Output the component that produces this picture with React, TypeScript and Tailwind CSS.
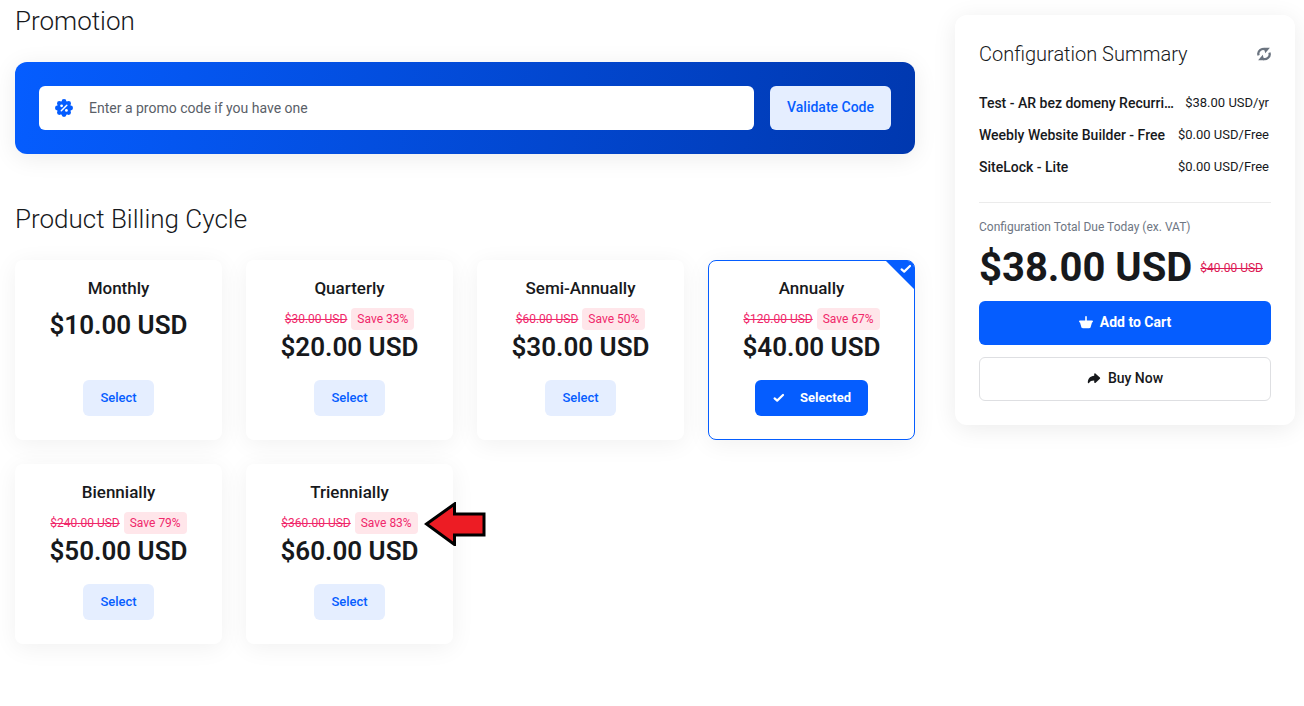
import { useState } from "react";

type Cycle = { name: string; price: string; old?: string; save?: string; note?: boolean };

const cycles: Cycle[] = [
  { name: "Monthly", price: "$10.00 USD" },
  { name: "Quarterly", price: "$20.00 USD", old: "$30.00 USD", save: "Save 33%" },
  { name: "Semi-Annually", price: "$30.00 USD", old: "$60.00 USD", save: "Save 50%" },
  { name: "Annually", price: "$40.00 USD", old: "$120.00 USD", save: "Save 67%" },
  { name: "Biennially", price: "$50.00 USD", old: "$240.00 USD", save: "Save 79%" },
  { name: "Triennially", price: "$60.00 USD", old: "$360.00 USD", save: "Save 83%", note: true },
];

const items = [
  { name: "Test - AR bez domeny Recurri…", price: "$38.00 USD/yr" },
  { name: "Weebly Website Builder - Free", price: "$0.00 USD/Free" },
  { name: "SiteLock - Lite", price: "$0.00 USD/Free" },
];

function CheckIcon({ className }: { className?: string }) {
  return (
    <svg viewBox="0 0 14 14" className={className} fill="none" stroke="currentColor" strokeWidth="2.2" strokeLinecap="round" strokeLinejoin="round" aria-hidden="true">
      <path d="M2.6 7.4 5.2 9.6 11 4" />
    </svg>
  );
}

function PercentIcon() {
  return (
    <svg viewBox="0 0 18 18" className="h-[18px] w-[18px] shrink-0" fill="#055dff" aria-hidden="true">
      <circle cx="9" cy="9" r="7" />
      <circle cx="9" cy="2.4" r="2.4" />
      <circle cx="13.6" cy="4.4" r="2.4" />
      <circle cx="15.6" cy="9" r="2.4" />
      <circle cx="13.6" cy="13.6" r="2.4" />
      <circle cx="9" cy="15.6" r="2.4" />
      <circle cx="4.4" cy="13.6" r="2.4" />
      <circle cx="2.4" cy="9" r="2.4" />
      <circle cx="4.4" cy="4.4" r="2.4" />
      <path d="M6.3 11.8 11.8 6.3" stroke="#fff" strokeWidth="1.5" strokeLinecap="round" />
      <circle cx="6.6" cy="6.8" r="1.4" fill="#fff" />
      <circle cx="11.4" cy="11.4" r="1.4" fill="#fff" />
    </svg>
  );
}

function RefreshIcon() {
  return (
    <svg viewBox="0 0 14 14" className="h-3.5 w-3.5" fill="currentColor" aria-hidden="true">
      <path d="M1.6 8.4A4.900 4.900 0 0 1 8.600 2.500" fill="none" stroke="currentColor" strokeWidth="2.3" />
      <path d="M7 .8h5.900L8.200 6.200Z" />
      <path d="M12.400 5.600A4.900 4.900 0 0 1 5.400 11.500" fill="none" stroke="currentColor" strokeWidth="2.3" />
      <path d="M7 13.200H1.100L5.800 7.800Z" />
    </svg>
  );
}

function BasketIcon() {
  return (
    <svg viewBox="0 0 14 14" className="h-3.5 w-3.5" fill="currentColor" aria-hidden="true">
      <path d="M6.200 1.700a.8.8 0 0 1 1.600 0V6H6.200Z" />
      <path d="M.9 5.500h12.200c.6 0 1 .6.800 1.200-.1.400-.4.600-.9.700l-1.300 4.600c-.2.800-.8 1.200-1.500 1.200H3.800c-.7 0-1.300-.4-1.500-1.200L1 7.400C.5 7.300.2 7.100.1 6.700-.1 6.100.3 5.500.9 5.500Z" />
    </svg>
  );
}

function ForwardIcon() {
  return (
    <svg viewBox="0 0 14 14" className="h-3.5 w-3.5" fill="currentColor" aria-hidden="true">
      <path d="M7.200 3c0-.7.700-1 1.200-.6l4.500 4.100c.4.400.4.900 0 1.300l-4.500 4.100c-.5.400-1.200.1-1.200-.6V9.500C4.500 9.500 3 10.300 2 12c-.3.600-1.200.4-1.200-.4C.8 7.800 3.200 5.100 7.200 4.800Z" />
    </svg>
  );
}

function NoteArrow() {
  return (
    <svg viewBox="0 0 62 44" className="pointer-events-none absolute top-[37px] left-[177px] z-10 h-11 w-[62px]" aria-hidden="true">
      <path d="M2.500 22 30.500 2v10H60v21H30.500v9.500Z" fill="#ed1c24" stroke="#000" strokeWidth="3" />
    </svg>
  );
}

export default function App() {
  const [selected, setSelected] = useState("Annually");
  return (
    <div className="flex min-h-screen items-start gap-10 bg-white pr-[9px] pb-10 pl-[15px] font-['Roboto','Liberation_Sans',sans-serif] text-[#17191c]">
      <main className="min-w-0 flex-1 pt-1">
        <section>
          <h2 className="text-[26px] leading-[34px] font-light">Promotion</h2>
          <form
            onSubmit={(e) => e.preventDefault()}
            className="mt-6 flex gap-4 rounded-xl bg-[linear-gradient(100deg,#055dff,#0038af)] p-6 shadow-[0_4px_24px_rgba(0,0,0,0.08)]"
          >
            <label className="flex h-11 min-w-0 flex-1 items-center gap-4 rounded-md bg-white px-4">
              <PercentIcon />
              <input
                type="text"
                aria-label="Promo code"
                placeholder="Enter a promo code if you have one"
                className="min-w-0 flex-1 bg-transparent text-sm outline-none placeholder:text-[#5a6068]"
              />
            </label>
            <button type="submit" className="h-11 rounded-md bg-[#e5eeff] px-[17px] pb-0.5 text-sm font-medium text-[#055dff]">
              Validate Code
            </button>
          </form>
        </section>

        <section className="mt-12">
          <h2 className="text-[26px] leading-[34px] font-light">Product Billing Cycle</h2>
          <div className="mt-6 grid grid-cols-4 gap-6">
            {cycles.map((c) => {
              const on = c.name === selected;
              return (
                <article
                  key={c.name}
                  className={`relative flex min-h-[180px] flex-col items-center rounded-lg border bg-white px-3 pt-[15px] pb-[23px] shadow-[0_4px_24px_rgba(0,0,0,0.06)] ${on ? "border-[#055dff]" : "border-transparent"}`}
                >
                  {on && (
                    <span className="absolute top-0 right-0 h-7 w-7 overflow-hidden rounded-tr-md bg-[#055dff] text-white [clip-path:polygon(0_0,100%_0,100%_100%)]">
                      <CheckIcon className="absolute top-px right-px h-3.5 w-3.5" />
                    </span>
                  )}
                  <h3 className="text-[17px] leading-6 font-medium">{c.name}</h3>
                  {c.old && (
                    <div className="mt-2 flex items-center gap-1 text-xs text-[#f0286a]">
                      <s>{c.old}</s>
                      <span className="rounded-sm bg-[#ffe6ea] px-1.5 leading-[22px]">{c.save}</span>
                    </div>
                  )}
                  <p className={`text-[26px] leading-[34px] font-semibold ${c.old ? "" : "mt-2"}`}>{c.price}</p>
                  <button
                    type="button"
                    onClick={() => setSelected(c.name)}
                    className={`mt-auto flex h-9 items-center gap-3.5 rounded-md px-[17px] text-[13px] ${on ? "bg-[#055dff] font-bold text-white" : "bg-[#e5eeff] font-medium text-[#055dff]"}`}
                  >
                    {on && <CheckIcon className="h-3.5 w-3.5" />}
                    {on ? "Selected" : "Select"}
                  </button>
                  {c.note && <NoteArrow />}
                </article>
              );
            })}
          </div>
        </section>
      </main>

      <aside className="mt-[15px] w-[340px] shrink-0 rounded-xl bg-white p-6 shadow-[0_4px_24px_rgba(0,0,0,0.08)]">
        <div className="flex items-center justify-between">
          <h2 className="text-xl leading-[30px] font-light">Configuration Summary</h2>
          <button type="button" aria-label="Refresh summary" className="text-[#6b7480]">
            <RefreshIcon />
          </button>
        </div>
        <ul className="mt-6 flex flex-col gap-3 border-b border-[#ebebeb] pb-[25px]">
          {items.map((i) => (
            <li key={i.name} className="flex items-center justify-between gap-2 pr-0.5 leading-5">
              <span className="text-sm leading-5 font-medium">{i.name}</span>
              <span className="shrink-0 text-[13px]">{i.price}</span>
            </li>
          ))}
        </ul>
        <p className="mt-3.5 text-xs leading-5 text-[#6e7683]">Configuration Total Due Today (ex. VAT)</p>
        <div className="mt-2 flex items-center gap-2">
          <strong className="text-[40px] leading-[46px] font-bold">$38.00 USD</strong>
          <s className="text-xs text-[#dc1a55]">$40.00 USD</s>
        </div>
        <button type="button" className="mt-2.5 flex h-11 w-full items-center justify-center gap-[7px] rounded-md bg-[#055dff] pb-0.5 text-sm font-bold text-white">
          <BasketIcon />
          Add to Cart
        </button>
        <button type="button" className="mt-3 flex h-11 w-full items-center justify-center gap-[7px] rounded-md border border-[#dedfe2] bg-white pb-0.5 text-sm font-medium">
          <ForwardIcon />
          Buy Now
        </button>
      </aside>
    </div>
  );
}
